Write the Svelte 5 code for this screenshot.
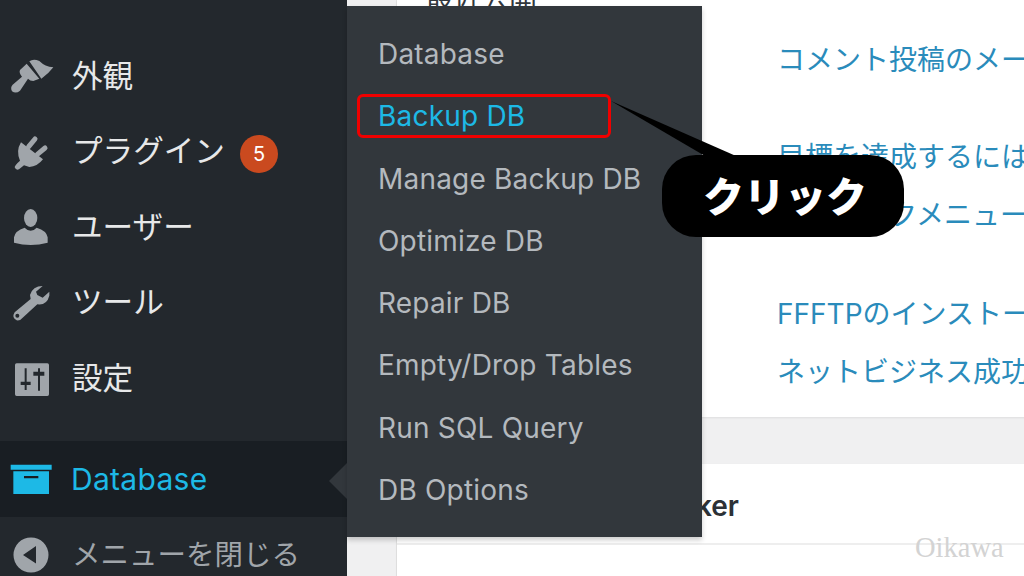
<script>
  const menu = [
    { label: '外観', icon: 'brush', vb: '0 -12 180 180' },
    { label: 'プラグイン', icon: 'plug', badge: 5, vb: '0 -12 180 180' },
    { label: 'ユーザー', icon: 'user', vb: '0 -9 180 180' },
    { label: 'ツール', icon: 'tool', vb: '0 -6 180 180' },
    { label: '設定', icon: 'settings', vb: '0 -3 180 180' }
  ];
  const sub = ['Database', 'Backup DB', 'Manage Backup DB', 'Optimize DB', 'Repair DB', 'Empty/Drop Tables', 'Run SQL Query', 'DB Options'];
</script>

{#snippet icon(name, vb)}
  <svg class="icon" viewBox={vb} aria-hidden="true">
    {#if name === 'brush'}
      <path d="M88 34 Q100 25 118 33 Q135 50 160 52 Q145 72 124 86 Z" />
      <path d="M80 41 L118 86 L100 93 Q90 93 84 86 L60 122 Q48 132 36 124 Q30 112 38 104 L66 80 Q56 68 60 60 Z" />
    {:else if name === 'plug'}
      <path class="prong" d="M86 62 L105 39 M112 85 L135 66" />
      <path d="M63 49 L129 100 Q112 122 88 123 L72 118 L57 130 Q48 134 44 124 Q44 118 60 104 Q47 75 63 49 Z" />
    {:else if name === 'user'}
      <ellipse cx="92" cy="54" rx="20" ry="27" />
      <path d="M42 128 L42 112 Q45 92 74 83 Q92 102 110 83 Q140 92 143 112 L143 128 Q92 142 42 128 Z" />
    {:else if name === 'tool'}
      <path fill-rule="evenodd" d="M128 33 Q98 33 90 60 L92 72 L44 112 Q34 128 50 136 Q60 138 68 128 L112 88 Q140 92 148 62 L148 50 L128 68 L112 60 L108 50 Z M52 116 A6 6 0 1 0 52.1 128 A6 6 0 1 0 52 116 Z" />
    {:else if name === 'settings'}
      <path fill-rule="evenodd" d="M50 40 H142 Q147 40 147 45 V133 Q147 138 142 138 H50 Q45 138 45 133 V45 Q45 40 50 40 Z M74 55 V95 H62 V105 H74 V120 H80 V105 H92 V95 H80 V55 Z M114 55 V65 H100 V77 H114 V122 H120 V77 H133 V65 H120 V55 Z" />
    {/if}
  </svg>
{/snippet}

<div class="page">
  <aside class="sidebar">
    <ul class="menu">
      {#each menu as item}
        <li class="row">
          <span class="slot">{@render icon(item.icon, item.vb)}</span>
          <span class="label">{item.label}</span>
          {#if item.badge}<span class="badge">{item.badge}</span>{/if}
        </li>
      {/each}
    </ul>
    <div class="row current">
      <span class="slot">
        <svg class="icon tint" viewBox="0 0 180 180" aria-hidden="true">
          <path fill-rule="evenodd" d="M32 47 H155 V62 H32 Z M40 67 H147 V135 H40 Z M72 81 V88 H115 V81 Z" />
        </svg>
      </span>
      <span class="label">Database</span>
      <span class="notch"></span>
    </div>
    <div class="row collapse">
      <span class="slot">
        <svg class="icon" viewBox="0 0 60 60" aria-hidden="true">
          <path fill-rule="evenodd" d="M31 12.5 A17.5 17.5 0 1 1 31 47.5 A17.5 17.5 0 1 1 31 12.5 Z M36 21 L23 30 L36 38.5 Z" />
        </svg>
      </span>
      <span class="label">メニューを閉じる</span>
    </div>
  </aside>

  <main class="main">
    <section class="card top">
      <div class="left-col"><h2 class="heading">最近公開</h2></div>
      <div class="links">
        <a class="link first">コメント投稿のメール通知</a>
        <a class="link second">目標を達成するには</a>
        <a class="link third">サブリンクメニューの作成</a>
        <a class="link fourth">FFFTPのインストール方法</a>
        <a class="link fifth">ネットビジネス成功</a>
      </div>
    </section>
    <section class="card bottom">
      <h2 class="title">Broken Link Checker</h2>
    </section>
  </main>

  <ul class="flyout">
    {#each sub as s, i}
      <li class="sub" class:active={i === 1}>{s}</li>
    {/each}
  </ul>

  <div class="callout">
    <div class="highlight"></div>
    <svg class="tail" viewBox="0 0 130 60" aria-hidden="true"><path d="M1 1 L126 56 L95 56 Z" /></svg>
    <div class="bubble">クリック</div>
  </div>

  <span class="mark">Oikawa</span>
</div>

<style>
  :global(body) {
    margin: 0;
    background: #f0f0f1;
  }
  .page {
    position: relative;
    display: flex;
    width: 1024px;
    height: 576px;
    overflow: hidden;
    font-family: Inter, "Noto Sans CJK JP", sans-serif;
  }
  .sidebar {
    flex: 0 0 347px;
    background: #23282d;
    padding-top: 38.4px;
    box-sizing: border-box;
  }
  .menu {
    list-style: none;
    margin: 0 0 24.6px;
    padding: 0;
  }
  .row {
    position: relative;
    display: flex;
    align-items: center;
    height: 75.6px;
    color: #e7e8e9;
    font-size: 30.6px;
  }
  .slot {
    flex: 0 0 72px;
    display: flex;
    box-sizing: border-box;
  }
  .icon {
    width: 60px;
    height: 60px;
    fill: #a0a5aa;
  }
  .prong {
    fill: none;
    stroke: #a0a5aa;
    stroke-width: 15;
    stroke-linecap: round;
  }
  .label {
    white-space: nowrap;
    margin-bottom: 5px;
  }
  .badge {
    display: flex;
    align-items: center;
    justify-content: center;
    width: 38px;
    height: 38px;
    margin: 4px 0 0 15px;
    border-radius: 50%;
    background: #ca4a1f;
    color: #fff;
    font-size: 20px;
  }
  .current {
    background: #191e23;
    color: #1db9e6;
    font-size: 30px;
  }
  .current .label {
    margin-bottom: 0;
    margin-left: -1px;
    letter-spacing: 0.3px;
  }
  .tint {
    fill: #1db9e6;
  }
  .notch {
    position: absolute;
    right: 0;
    top: 22px;
    border: 18px solid transparent;
    border-left: 0;
    border-right-color: #32373c;
  }
  .collapse {
    color: #a0a5aa;
    height: 76px;
    font-size: 28.5px;
  }
  .collapse .label {
    margin-bottom: 4px;
  }
  .main {
    flex: 1;
    padding-left: 50px;
    display: flex;
    flex-direction: column;
    gap: 47px;
  }
  .card {
    background: #fff;
    box-shadow: 0 1px 2px rgba(0, 0, 0, 0.08), -1px 0 0 #e4e4e4;
  }
  .top {
    height: 417px;
    display: flex;
    flex: none;
    overflow: hidden;
  }
  .left-col {
    width: 381px;
    flex: none;
  }
  .heading {
    margin: -15px 0 0 28px;
    font-size: 28px;
    font-weight: 400;
    color: #32373c;
    line-height: 28px;
  }
  .links {
    display: flex;
    flex-direction: column;
    white-space: nowrap;
    margin-left: -1px;
  }
  .link {
    color: #2a8bbb;
    font-size: 28px;
    line-height: 40px;
  }
  .first { margin-top: 40px; }
  .second { margin-top: 57px; }
  .third { margin-top: 18px; }
  .fourth { margin-top: 59px; }
  .fifth { margin-top: 18px; }
  .bottom {
    flex: 1;
    position: relative;
  }
  .title {
    margin: 0;
    height: 81px;
    box-sizing: border-box;
    padding: 24px 0 0 63px;
    border-bottom: 2px solid #eee;
    font-size: 28px;
    font-weight: 600;
    line-height: 36px;
    color: #2c3136;
    white-space: nowrap;
  }
  .flyout {
    position: absolute;
    left: 347px;
    top: 6px;
    width: 355px;
    height: 531px;
    box-sizing: border-box;
    margin: 0;
    padding: 17px 0 0 31px;
    list-style: none;
    background: #32373c;
    box-shadow: 0 3px 5px rgba(0, 0, 0, 0.2);
  }
  .sub {
    height: 62.3px;
    line-height: 62.3px;
    color: #b4b9be;
    font-size: 28px;
    letter-spacing: 0.2px;
    white-space: nowrap;
  }
  .active {
    color: #1db9e6;
  }
  .highlight {
    position: absolute;
    left: 357px;
    top: 94px;
    width: 254px;
    height: 44px;
    box-sizing: border-box;
    border: 3px solid #f00000;
    border-radius: 6px;
  }
  .tail {
    position: absolute;
    left: 610px;
    top: 100px;
    width: 130px;
    height: 60px;
    fill: #000;
  }
  .bubble {
    position: absolute;
    left: 662px;
    top: 155px;
    width: 242px;
    height: 82px;
    box-sizing: border-box;
    padding-left: 4px;
    border-radius: 34px;
    background: #000;
    color: #fff;
    font-size: 41px;
    font-weight: 900;
    line-height: 78px;
    text-align: center;
    font-family: "Noto Sans CJK JP", sans-serif;
  }
  .mark {
    position: absolute;
    left: 915px;
    top: 532px;
    color: #d3d3d3;
    font-family: "Liberation Serif", serif;
    font-size: 28.5px;
  }
</style>
